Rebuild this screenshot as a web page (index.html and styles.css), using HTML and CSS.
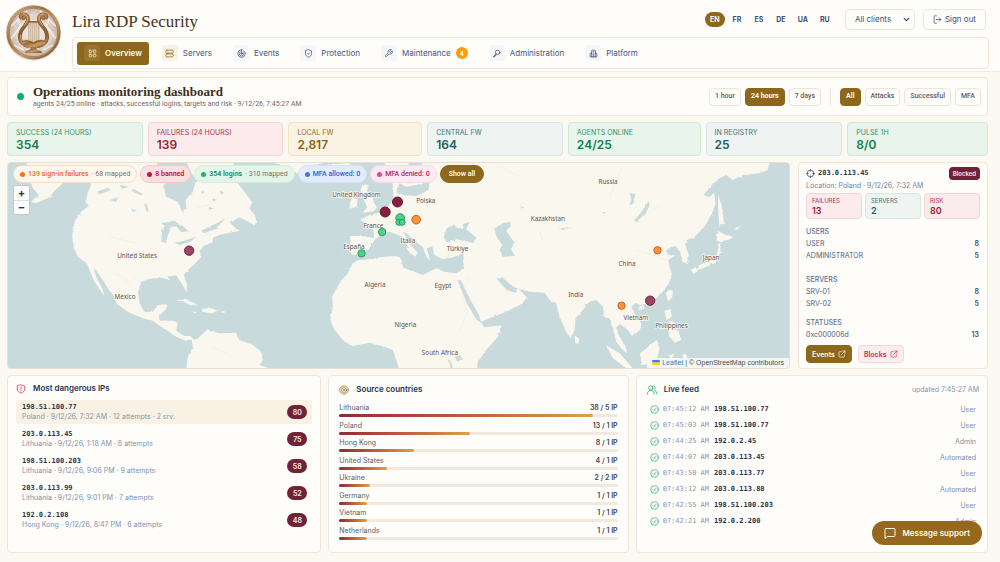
FILE: index.html
```html
<!DOCTYPE html>
<html lang="en">
<head>
<meta charset="utf-8">
<meta name="viewport" content="width=device-width, initial-scale=1">
<title>Lira RDP Security</title>
<link rel="stylesheet" href="styles.css">
</head>
<body>
<svg class="sprite" aria-hidden="true">
  <symbol id="i-grid" viewBox="0 0 24 24"><rect x="3" y="3" width="7" height="7" rx="2"/><rect x="14" y="3" width="7" height="7" rx="2"/><rect x="3" y="14" width="7" height="7" rx="2"/><rect x="14" y="14" width="7" height="7" rx="2"/></symbol>
  <symbol id="i-server" viewBox="0 0 24 24"><rect x="2" y="3" width="20" height="8" rx="3"/><rect x="2" y="13" width="20" height="8" rx="3"/></symbol>
  <symbol id="i-target" viewBox="0 0 24 24"><circle cx="12" cy="12" r="10"/><circle cx="12" cy="12" r="6"/><circle cx="12" cy="12" r="2"/></symbol>
  <symbol id="i-radar" viewBox="0 0 24 24"><path d="M19 5a10 10 0 1 1-14 0M16 8a6 6 0 1 1-8 0M5 5a10 10 0 0 1 9-3M12 12V2"/><circle cx="12" cy="12" r="2"/></symbol>
  <symbol id="i-shield" viewBox="0 0 24 24"><path d="M12 2l8 3v7c0 5-3 8-8 10-5-2-8-5-8-10V5z"/><path d="M9 12l2 2 4-4"/></symbol>
  <symbol id="i-alert" viewBox="0 0 24 24"><path d="M12 2l9 3v7c0 5-4 8-9 10-5-2-9-5-9-10V5z"/><path d="M12 7v6M12 16v1"/></symbol>
  <symbol id="i-wrench" viewBox="0 0 24 24"><path d="M15 6a1 1 0 0 0 0 1.500l1.500 1.500a1 1 0 0 0 1.500 0l4-4a6 6 0 0 1-8 8l-7 7a2 2 0 0 1-3-3l7-7a6 6 0 0 1 8-8z"/></symbol>
  <symbol id="i-key" viewBox="0 0 24 24"><circle cx="15" cy="9" r="6"/><path d="M11 13l-8 8h4v-3h3v-3"/></symbol>
  <symbol id="i-building" viewBox="0 0 24 24"><path d="M7 21V5q0-2 2-2h6q2 0 2 2v16M7 11H4q-1 0-1 2v8h18v-8q0-2-1-2h-3M11 7h2M11 11h2M11 15h2M11 21v-3h2v3"/></symbol>
  <symbol id="i-logout" viewBox="0 0 24 24"><path d="M9 2H5Q3 2 3 4v16q0 2 2 2h4M9 12h12M16 7l5 5-5 5"/></symbol>
  <symbol id="i-cross" viewBox="0 0 24 24"><circle cx="12" cy="12" r="9"/><path d="M12 1v5M12 18v5M1 12h5M18 12h5"/></symbol>
  <symbol id="i-ext" viewBox="0 0 24 24"><path d="M10 5H5Q3 5 3 7v12q0 2 2 2h12q2 0 2-2v-5M14 3h7v7M21 3L11 13"/></symbol>
  <symbol id="i-users" viewBox="0 0 24 24"><circle cx="9" cy="7" r="5"/><path d="M1 22q0-9 8-9t8 9M16 2a5 5 0 0 1 1 9q6 2 6 10"/></symbol>
  <symbol id="i-check" viewBox="0 0 24 24"><circle cx="12" cy="12" r="10"/><path d="M8 12l3 3 5-6"/></symbol>
  <symbol id="i-chat" viewBox="0 0 24 24"><path d="M4 3h16q2 0 2 2v12q0 2-2 2H7l-5 4V5q0-2 2-2z"/></symbol>
  <symbol id="i-down" viewBox="0 0 24 24"><path d="M4 8l8 8 8-8"/></symbol>
</svg>

<header class="header">
  <svg class="logo" viewBox="13 11 172 172" role="img" aria-label="Lira logo">
    <defs>
      <linearGradient id="bronze" x1="0" y1="0" x2="1" y2="1"><stop offset="0" stop-color="#dfb98a"/><stop offset=".35" stop-color="#9b6b3c"/><stop offset=".6" stop-color="#c79b68"/><stop offset="1" stop-color="#74491f"/></linearGradient>
      <linearGradient id="bronze2" x1="0" y1="0" x2="0" y2="1"><stop offset="0" stop-color="#b5824e"/><stop offset=".6" stop-color="#8b5c30"/><stop offset="1" stop-color="#bd8e5c"/></linearGradient>
      <radialGradient id="disc"><stop offset="0" stop-color="#f3ece6"/><stop offset=".7" stop-color="#dfd3ca"/><stop offset="1" stop-color="#c4ab95"/></radialGradient>
    </defs>
    <circle cx="99" cy="98" r="84" fill="#e6ddd2"/>
    <circle cx="99" cy="97" r="78" fill="url(#disc)" stroke="url(#bronze)" stroke-width="7"/>
    <circle cx="99" cy="97" r="73" fill="none" stroke="#80552d" stroke-width="1.500"/>
    <path d="M32 78L80 30M32 115L60 78M166 78L118 30M166 115L138 78M40 135L70 150M158 135L128 150M50 55l20 40M148 55l-20 40" stroke="#fff" stroke-width="5" fill="none" opacity=".6"/>
    <path d="M35 95L90 32M163 95L108 32" stroke="#c9b7a8" stroke-width="2" fill="none"/>
    <path d="M85 68v52M91 68v54M97 68v56M103 68v56M109 68v54M115 68v52" stroke="#a9825c" stroke-width="2"/>
    <path d="M78 65h42" stroke="#8f6237" stroke-width="5"/>
    <g fill="none" stroke-linecap="round">
      <path d="M61 52a6 6 0 1 1 8 2M67 42c20 0 19 20 6 35C56 96 50 120 72 134c8 4 18 5 27 5M137 52a6 6 0 1 0-8 2M131 42c-20 0-19 20-6 35 17 19 23 43 1 57-8 4-18 5-27 5" stroke="#744a24" stroke-width="11"/>
      <path d="M61 52a6 6 0 1 1 8 2M67 42c20 0 19 20 6 35C56 96 50 120 72 134c8 4 18 5 27 5M137 52a6 6 0 1 0-8 2M131 42c-20 0-19 20-6 35 17 19 23 43 1 57-8 4-18 5-27 5" stroke="url(#bronze2)" stroke-width="8"/>
      <path d="M70 41c15 2 15 18 2 34M128 41c-15 2-15 18-2 34M60 105c0 10 4 18 12 24" stroke="#e8c79c" stroke-width="2"/>
    </g>
    <path d="M62 125c12-10 26-6 37 1 11-7 25-11 37-1-8 15-22 20-37 20s-29-5-37-20z" fill="url(#bronze)"/>
    <path d="M64 125c14-6 24-1 35 5 11-6 21-11 35-5" fill="none" stroke="#6e4520" stroke-width="2"/>
    <path d="M92 143h14l3 7 14 4v4H75v-4l14-4z" fill="url(#bronze)" stroke="#744a24"/>
  </svg>
  <div class="header-main">
    <div class="topbar">
      <div class="brand">Lira RDP Security</div>
      <div class="langs" role="group" aria-label="Language">
        <button class="lang on">EN</button><button class="lang">FR</button><button class="lang">ES</button><button class="lang">DE</button><button class="lang">UA</button><button class="lang">RU</button>
      </div>
      <div class="picker"><select aria-label="Client"><option>All clients</option></select><svg class="icon bold"><use href="#i-down"/></svg></div>
      <button class="signout"><svg class="icon"><use href="#i-logout"/></svg>Sign out</button>
    </div>
    <nav class="nav">
      <a class="nav-item on" href="#"><span class="tile"><svg class="icon"><use href="#i-grid"/></svg></span>Overview</a>
      <a class="nav-item" href="#"><span class="tile gold"><svg class="icon"><use href="#i-server"/></svg></span>Servers</a>
      <a class="nav-item" href="#"><span class="tile"><svg class="icon"><use href="#i-radar"/></svg></span>Events</a>
      <a class="nav-item" href="#"><span class="tile"><svg class="icon"><use href="#i-shield"/></svg></span>Protection</a>
      <a class="nav-item" href="#"><span class="tile"><svg class="icon"><use href="#i-wrench"/></svg></span>Maintenance<span class="count">4</span></a>
      <a class="nav-item" href="#"><span class="tile"><svg class="icon"><use href="#i-key"/></svg></span>Administration</a>
      <a class="nav-item" href="#"><span class="tile"><svg class="icon"><use href="#i-building"/></svg></span>Platform</a>
    </nav>
  </div>
</header>

<main class="main">
  <section class="hero card">
    <span class="online"></span>
    <div class="hero-text">
      <h1>Operations monitoring dashboard</h1>
      <p>agents 24/25 online · attacks, successful logins, targets and risk · 9/12/26, 7:45:27 AM</p>
    </div>
    <div class="filters">
      <button class="filter">1 hour</button><button class="filter on">24 hours</button><button class="filter">7 days</button>
      <span class="divider"></span>
      <button class="filter on">All</button><button class="filter">Attacks</button><button class="filter">Successful</button><button class="filter">MFA</button>
    </div>
  </section>

  <section class="stats">
    <div class="stat green"><span>SUCCESS (24 HOURS)</span><b>354</b></div>
    <div class="stat red"><span>FAILURES (24 HOURS)</span><b>139</b></div>
    <div class="stat amber"><span>LOCAL FW</span><b>2,817</b></div>
    <div class="stat teal"><span>CENTRAL FW</span><b>164</b></div>
    <div class="stat green"><span>AGENTS ONLINE</span><b>24/25</b></div>
    <div class="stat teal"><span>IN REGISTRY</span><b>25</b></div>
    <div class="stat green"><span>PULSE 1H</span><b>8/0</b></div>
  </section>

  <section class="middle">
    <div class="map">
      <svg class="world" viewBox="24 9 2346 615" preserveAspectRatio="xMidYMid slice" role="img" aria-label="World map of sign-ins">
        <defs><filter id="coast" x="0" y="0" width="100%" height="100%"><feTurbulence type="fractalNoise" baseFrequency="0.1" numOctaves="3" seed="4"/><feDisplacementMap in="SourceGraphic" scale="7"/></filter></defs>
        <g filter="url(#coast)">
          <g class="land">
            <path d="M80 0H290L240 30 195 65 165 92 152 110 110 130 95 125 118 105 100 85 88 50z"/>
            <path d="M235 0H470L480 40 520 60 490 75 500 110 535 125 548 155 560 145 558 120 580 95 590 60 570 30 560 0H700L705 40 715 70 735 95 758 125 750 145 765 165 772 190 755 188 718 172 692 190 708 204 720 212 690 218 660 224 640 234 640 246 612 258 600 272 606 290 585 312 565 330 553 345 563 375 562 397 545 368 530 346 505 350 512 360 485 353 450 356 425 366 416 395 420 430 435 456 460 455 475 435 505 432 498 450 478 466 480 482 520 482 535 488 530 512 548 526 570 527 586 540 600 530 625 508 632 514 660 520 710 518 720 540 760 555 785 575 790 600 780 615 825 630H560L565 590 580 562 576 538 558 542 530 530 505 512 480 497 460 482 430 475 385 455 352 432 345 410 325 385 300 345 283 322 290 350 308 385 315 408 298 385 282 360 268 325 262 310 235 290 222 260 218 225 225 185 245 155 268 138 258 125 265 98 275 72 250 35z"/>
            <path d="M755 160l10 2 5 20-4 14-16-8zM528 422l30-6 40 20-25 0-25-12zM607 448l20-6 28 10-18 8-28-3zM578 455l14 1-4 4zM664 454h12v4h-12z"/>
            <path d="M800 0H1010L960 12 920 25 900 45 870 25zM985 14l60-5 25 12-40 15-35-8z"/>
            <path d="M1090 72l18 4-6 18 15 14 8 22 8 14-12 10-32 4 14-16-6-14-8-16-6-20zM1058 114l16 4-2 22-22 6 2-20z"/>
            <g transform="translate(1170)">
              <path d="M-20 0H1140L1135 30 1110 40 1060 45 1030 60 1010 45 985 58 962 80 942 106 962 110 974 98 978 130 968 160 945 200 915 230 892 240 887 252 898 285 892 310 878 306 872 275 860 260 845 260 828 272 838 285 857 286 836 300 840 320 848 345 838 370 820 395 800 415 772 430 752 436 740 428 725 440 735 460 755 490 752 510 728 528 715 510 692 492 680 502 690 530 706 555 714 580 698 568 680 545 672 510 660 475 645 472 640 440 620 420 600 425 580 450 558 475 555 510 544 535 530 515 510 470 500 430 485 425 465 398 420 395 380 385 358 370 338 352 330 358 348 385 368 396 386 385 412 412 400 430 350 455 275 485 282 502 337 496 325 530 290 570 265 605 262 630H30L20 600 10 570-15 560-60 548-110 558-135 545-165 510-178 480-170 440-172 410-150 370-125 340-110 310-92 300-60 298-20 290 20 288 40 286 55 260 40 230 0 215-30 228-45 240-62 268-90 285-112 284-120 270-118 228-85 228-46 234-50 202-88 180-62 166-30 158-5 140 12 118 10 75 0 40z"/>
              <path d="M828 400l10-10 12 2-2 22-12 10zM825 452l18-4 4 22-16 10zM838 500l30 14 6 26-18 8-18-20zM836 482l18 4-4 12zM555 526l14 10-2 16-10-4zM650 556l40 24 40 45h-20l-40-30zM752 580l50-40 8 24-10 44-44 8zM836 586l20-5-8 12 6 12zM880 583h12v20h-10zM748 440l14-5-4 14-10 2z"/>
              <path d="M986 105l10 30 8 55-14 10-4-50zM985 212l24 14 22 4-10 8-28 6-12-2zM994 248l-2 30-14 30-30 14-26 8 8-15 32-12 22-20 2-30zM905 328l14-6 4 14-12 6zM1035 208l20-12-12 14z"/>
            </g>
          </g>
          <g class="water" transform="translate(1170)">
            <path d="M-95 300L-60 290-30 262-20 240 0 230 25 232 42 255 62 280 78 290 84 278 60 250 40 215 55 222 85 250 100 262 110 290 122 300 112 265 128 258 134 284 160 298 190 292 222 280 222 325 200 340 165 335 140 325 100 345 60 330 40 322 34 292 0 285-40 294z"/>
            <path d="M163 232L172 204 192 194 204 204 222 204 220 192 240 186 230 208 262 234 250 248 200 238 172 248zM314 206L340 190 362 185 364 198 350 212 362 230 374 245 365 268 376 288 340 290 330 270 338 255 322 232zM205 362L214 360 240 415 268 465 276 490 262 480 232 430zM320 355l22 2 30 28 14 0-10 12-24-6zM40 105L20 98 30 70 50 80 100 72 112 50 150 40 120 60 118 90 80 108zM40 40L65 0 100 0 90 40 70 70 50 70z"/>
            <path d="M735 180l30-35 12-22 4 12-14 28-30 25zM720 100l18 2-8 30-10 4 6-20zM640 155l10 2-8 4zM510 208l10-5 30-2-28 8zM195 590l16-3 10 10-18 8zM176 595l10 14 6 22-8-8zM395 140l10 2-10 4z"/>
          </g>
          <g class="water"><path d="M485 245l4-40 18-14 40 4 20 18-22 4-14-18-16 2-10 26-6 22zM524 248l30-6 36-12-14 14-34 10zM485 190l40-8 14 10-40 8z"/>
            <path d="M292 95l34-12 8 8-34 12zM330 120l26-8-6 14zM400 86l30 16-6 4-28-12zM440 130l8 24-6 2-8-22zM395 145l18 8-14 2zM360 75l28 5-20 6zM605 90l10 6-8 6zM640 115l12 4-12 6zM660 90l14 10-10 3zM625 140l20 5-18 4zM605 212l50-24 24-14-30 32-36 14z"/></g>
        </g>
        <path class="river" d="M345 340l30 14 20 25M590 145l40-12M1410 350l-20 50 12 60-24 60M1560 50l-60-30M1630 240l-12-30M1900 180l80-40M1870 20l-40 90M330 230l80 20M640 560l60 30M1910 270l90 30M470 410l-70-60"/>
        <g class="labels">
          <text x="998" y="110">United Kingdom</text><text x="1250" y="130">Polska</text><text x="1092" y="204">France</text><text x="1031" y="268">España</text><text x="1203" y="248">Italia</text><text x="1342" y="274">Türkiye</text><text x="353" y="293">United States</text><text x="345" y="416">Mexico</text><text x="1095" y="380">Algeria</text><text x="1305" y="383">Egypt</text><text x="1185" y="502">Nigeria</text><text x="1267" y="585">South Africa</text><text x="1797" y="73">Russia</text><text x="1594" y="183">Kazakhstan</text><text x="1857" y="317">China</text><text x="2110" y="301">Japan</text><text x="1706" y="411">India</text><text x="1872" y="479">Vietnam</text><text x="1967" y="504">Philippines</text>
        </g>
        <g class="pins">
          <g class="pin-ban"><circle cx="1157" cy="156" r="15"/><circle cx="1194" cy="126" r="15"/></g>
          <g class="pin-ban soft"><circle cx="569" cy="272" r="14"/><circle cx="1952" cy="422" r="14"/></g>
          <g class="pin-fail"><circle cx="1250" cy="179" r="13"/><circle cx="1974" cy="271" r="11"/><circle cx="1866" cy="437" r="11"/></g>
          <g class="pin-ok"><circle cx="1148" cy="216" r="11"/><circle cx="1086" cy="280" r="11"/><circle cx="1202" cy="174" r="13"/><circle cx="1198" cy="187" r="9"/><circle cx="1208" cy="187" r="9"/></g>
        </g>
      </svg>
      <div class="chips">
        <button class="chip c-orange"><i></i><b>139 sign-in failures</b><span>· 68 mapped</span></button>
        <button class="chip c-red"><i></i><b>8 banned</b></button>
        <button class="chip c-green"><i></i><b>354 logins</b><span>· 310 mapped</span></button>
        <button class="chip c-blue"><i></i>MFA allowed: 0</button>
        <button class="chip c-pink"><i></i>MFA denied: 0</button>
        <button class="chip c-all"><b>Show all</b></button>
      </div>
      <div class="zoom"><button aria-label="Zoom in">+</button><button aria-label="Zoom out">−</button></div>
      <div class="credit"><svg class="flag" viewBox="0 0 12 8"><path fill="#4c7be1" d="M0 0h12v4H0z"/><path fill="#ffd500" d="M0 4h12v4H0z"/></svg><a href="#">Leaflet</a> | © OpenStreetMap contributors</div>
    </div>

    <aside class="card details">
      <div class="ip-head"><svg class="icon"><use href="#i-cross"/></svg><b class="mono">203.0.113.45</b><span class="blocked">Blocked</span></div>
      <p class="where">Location: Poland · 9/12/26, 7:32 AM</p>
      <div class="minis">
        <div class="mini red"><span>FAILURES</span><b>13</b></div>
        <div class="mini teal"><span>SERVERS</span><b>2</b></div>
        <div class="mini red"><span>RISK</span><b>80</b></div>
      </div>
      <dl class="group"><dt class="cap">USERS</dt><div><dt>USER</dt><dd>8</dd></div><div><dt>ADMINISTRATOR</dt><dd>5</dd></div></dl>
      <dl class="group"><dt class="cap">SERVERS</dt><div><dt>SRV-01</dt><dd>8</dd></div><div><dt>SRV-02</dt><dd>5</dd></div></dl>
      <dl class="group"><dt class="cap">STATUSES</dt><div><dt>0xc000006d</dt><dd>13</dd></div></dl>
      <div class="actions"><a class="action gold" href="#">Events<svg class="icon"><use href="#i-ext"/></svg></a><a class="action rose" href="#">Blocks<svg class="icon"><use href="#i-ext"/></svg></a></div>
    </aside>
  </section>

  <section class="bottom">
    <div class="card panel">
      <h2><svg class="icon red-i"><use href="#i-alert"/></svg>Most dangerous IPs</h2>
      <ul class="ips">
        <li class="on"><div><b class="mono">198.51.100.77</b><p>Poland · 9/12/26, 7:32 AM · 12 attempts · 2 srv.</p></div><span class="score">80</span></li>
        <li><div><b class="mono">203.0.113.45</b><p>Lithuania · 9/12/26, 1:18 AM · 8 attempts</p></div><span class="score">75</span></li>
        <li><div><b class="mono">198.51.100.203</b><p>Lithuania · 9/12/26, 9:06 PM · 9 attempts</p></div><span class="score">58</span></li>
        <li><div><b class="mono">203.0.113.99</b><p>Lithuania · 9/12/26, 9:01 PM · 7 attempts</p></div><span class="score">52</span></li>
        <li><div><b class="mono">192.0.2.108</b><p>Hong Kong · 9/12/26, 8:47 PM · 6 attempts</p></div><span class="score">48</span></li>
      </ul>
    </div>
    <div class="card panel sources">
      <h2><svg class="icon gold-i"><use href="#i-target"/></svg>Source countries</h2>
      <ul class="bars">
        <li><span>Lithuania</span><b>38 / 5 IP</b><div class="track"><div class="fill" style="width:91%"></div></div></li>
        <li><span>Poland</span><b>13 / 1 IP</b><div class="track"><div class="fill" style="width:47%"></div></div></li>
        <li><span>Hong Kong</span><b>8 / 1 IP</b><div class="track"><div class="fill" style="width:27%"></div></div></li>
        <li><span>United States</span><b>4 / 1 IP</b><div class="track"><div class="fill" style="width:17%"></div></div></li>
        <li><span>Ukraine</span><b>2 / 2 IP</b><div class="track"><div class="fill" style="width:11%"></div></div></li>
        <li><span>Germany</span><b>1 / 1 IP</b><div class="track"><div class="fill" style="width:10%"></div></div></li>
        <li><span>Vietnam</span><b>1 / 1 IP</b><div class="track"><div class="fill" style="width:10%"></div></div></li>
        <li><span>Netherlands</span><b>1 / 1 IP</b><div class="track"><div class="fill" style="width:10%"></div></div></li>
      </ul>
    </div>
    <div class="card panel feed">
      <h2><svg class="icon green-i"><use href="#i-users"/></svg>Live feed<small>updated 7:45:27 AM</small></h2>
      <ul class="events">
        <li><svg class="icon green-i"><use href="#i-check"/></svg><time>07:45:12 AM</time><b class="mono">198.51.100.77</b><span>User</span></li>
        <li><svg class="icon green-i"><use href="#i-check"/></svg><time>07:45:03 AM</time><b class="mono">198.51.100.77</b><span>User</span></li>
        <li><svg class="icon green-i"><use href="#i-check"/></svg><time>07:44:25 AM</time><b class="mono">192.0.2.45</b><span>Admin</span></li>
        <li><svg class="icon green-i"><use href="#i-check"/></svg><time>07:44:07 AM</time><b class="mono">203.0.113.45</b><span>Automated</span></li>
        <li><svg class="icon green-i"><use href="#i-check"/></svg><time>07:43:50 AM</time><b class="mono">203.0.113.77</b><span>User</span></li>
        <li><svg class="icon green-i"><use href="#i-check"/></svg><time>07:43:12 AM</time><b class="mono">203.0.113.88</b><span>Automated</span></li>
        <li><svg class="icon green-i"><use href="#i-check"/></svg><time>07:42:55 AM</time><b class="mono">198.51.100.203</b><span>User</span></li>
        <li><svg class="icon green-i"><use href="#i-check"/></svg><time>07:42:21 AM</time><b class="mono">192.0.2.200</b><span>Admin</span></li>
      </ul>
    </div>
  </section>
</main>
<button class="support"><svg class="icon"><use href="#i-chat"/></svg>Message support</button>
</body>
</html>
```

FILE: styles.css
```css
* { box-sizing: border-box; margin: 0; padding: 0; }

body {
  min-height: 100vh;
  display: flex;
  flex-direction: column;
  background: #fcf9f3;
  color: #2d3a54;
  font: 7px/9px Inter, Roboto, sans-serif;
}

button, select { font: inherit; color: inherit; border: 0; background: none; cursor: pointer; }
a { color: inherit; text-decoration: none; }
ul { list-style: none; }
.sprite { position: absolute; width: 0; height: 0; }

.icon {
  width: 9px;
  height: 9px;
  flex: none;
  fill: none;
  stroke: currentColor;
  stroke-width: 2;
  stroke-linecap: round;
  stroke-linejoin: round;
}
.icon.bold { stroke-width: 4; }
.mono, time { font-family: "DejaVu Sans Mono", "Liberation Mono", monospace; }
.hero p, .filter, .chip { font-family: Roboto, Inter, sans-serif; }

.card { background: #fefdfa; border: 1px solid #f0e7dc; border-radius: 4px; }

/* Header */
.header {
  display: flex;
  gap: 10px;
  padding: 4px 11px 2px 5px;
  background: #fefdfa;
  border-bottom: 1px solid #f0e9e0;
}
.logo { width: 57px; height: 57px; flex: none; }
.header-main { flex: 1; display: flex; flex-direction: column; gap: 7px; padding-top: 5px; }
.topbar { display: flex; align-items: center; height: 21px; padding-right: 3px; }
.brand { flex: 1; font: 17px/21px "Liberation Serif", serif; color: #463322; padding-top: 3px; }
.langs { display: flex; gap: 2px; margin-right: 10px; }
.lang { width: 20px; height: 15px; border-radius: 8px; font-weight: 700; color: #3f4f74; }
.lang.on { background: #8d671b; color: #fff8e8; }
.picker { position: relative; margin-right: 8px; }
.picker select {
  appearance: none;
  width: 70px;
  height: 21px;
  padding: 0 9px;
  border: 1px solid #ece5da;
  border-radius: 4px;
  font-size: 8px;
  font-weight: 400;
  color: #3f4f74;
}
.picker .icon { position: absolute; right: 5px; top: 7px; width: 7px; height: 7px; pointer-events: none; color: #2f4069; }
.signout {
  display: flex;
  align-items: center;
  gap: 3px;
  height: 21px;
  padding: 0 9px;
  border: 1px solid #ece5da;
  border-radius: 4px;
  font-size: 8px;
  font-weight: 400;
  color: #3f4f74;
}
.nav {
  display: flex;
  align-items: center;
  gap: 5px;
  height: 32px;
  padding: 0 4px;
  border: 1px solid #eee6dc;
  border-radius: 4px;
}
.nav-item {
  display: flex;
  align-items: center;
  gap: 5px;
  height: 23px;
  padding: 0 8px;
  border-radius: 3px;
  font-size: 8px;
  font-weight: 400;
  color: #45557a;
}
.nav-item.on { padding: 0 7px; background: #8d671b; color: #fffaf0; font-weight: 600; }
.tile { display: grid; place-items: center; width: 16px; height: 16px; border-radius: 3px; background: #f4f6f8; }
.tile.gold { background: #f9f2e3; color: #8d671b; }
.on .tile { background: #98742f; color: #f7e8c4; }
.count { display: grid; place-items: center; width: 12px; height: 12px; border-radius: 50%; background: #ff9c06; color: #fff; font-size: 6px; font-weight: 700; }

/* Main */
.main { flex: 1; display: flex; flex-direction: column; gap: 6px; padding: 5px 12px 9px 7px; }
.hero { display: flex; align-items: center; min-height: 39px; padding: 0 6px 0 9px; }
.online { width: 7px; height: 7px; border-radius: 50%; background: #0cae74; margin-right: 9px; }
.hero-text { flex: 1; }
.hero h1 { font: 700 13px/15px "Liberation Serif", serif; color: #3d2d20; }
.hero p { color: #716a68; line-height: 11px; }
.filters { display: flex; align-items: center; gap: 4px; }
.filter { height: 18px; padding: 0 5px; border: 1px solid #ede5db; border-radius: 4px; color: #655c57; font-weight: 500; }
.filter.on { background: #8d671b; border-color: #8d671b; color: #fffaf0; font-weight: 700; }
.divider { width: 1px; height: 17px; margin: 0 5px; background: #eee7de; }

.stats { display: grid; grid-template-columns: 136fr 136fr 134fr 136fr 133fr 137fr 141fr; gap: 5px; }
.stat { display: flex; flex-direction: column; padding: 5px 8px 3px; border: 1px solid; border-radius: 4px; font-weight: 400; }
.stat b { font-size: 12px; line-height: 15px; font-weight: 600; }
.green { background: #e9f5ec; border-color: #cfe9d8; color: #33915f; }
.green b { color: #11804b; }
.red { background: #fcebed; border-color: #f6d3d9; color: #a93549; }
.red b { color: #9b1b33; }
.amber { background: #faf2e2; border-color: #f2e3c3; color: #966b1f; }
.amber b { color: #8a5f15; }
.teal { background: #eff3f1; border-color: #d7e5e3; color: #34777a; }
.teal b { color: #1b5f63; }

/* Map row */
.middle { display: grid; grid-template-columns: 783fr 190fr; gap: 8px; }
.map { position: relative; overflow: hidden; border: 1px solid #e7e0d5; border-radius: 4px; background: #c8dadc; }
.world { position: absolute; inset: 0; width: 100%; height: 100%; }
.land { fill: #faf7ef; }
.water { fill: #c8dadc; }
.river { fill: none; stroke: #dde5df; stroke-width: 1; }
.labels { font: 19px "Noto Sans", sans-serif; fill: #5c5452; stroke: #faf7ef; stroke-width: 4; paint-order: stroke; }
.pins { stroke-width: 3; }
.pin-ban { fill: #85213f; stroke: #641630; }
.pin-ban.soft { fill: #9c4665; stroke: #742746; }
.pin-fail { fill: #fb923c; stroke: #c9611c; }
.pin-ok { fill: #4fd18c; stroke: #249d60; }
.chips { position: absolute; left: 5px; top: 2px; display: flex; gap: 3px; }
.chip { display: flex; align-items: center; gap: 3px; height: 18px; padding: 0 6px; border: 1px solid; border-radius: 9px; font-weight: 500; white-space: nowrap; }
.chip b { font-weight: 600; }
.chip span { color: #7a7068; font-weight: 400; }
.chip i { width: 5px; height: 5px; border-radius: 50%; background: #f97316; }
.c-orange { background: #fdf7ee; border-color: #fbdcc0; color: #ee6c1b; }
.c-red { background: #fcdfe1; border-color: #f7c4ca; color: #be1238; }
.c-red i { background: #c9163c; }
.c-green { background: #e4f6ea; border-color: #cff0da; color: #208a50; }
.c-green i { background: #20b663; }
.c-blue { background: #e3ecfc; border-color: #d5e2fb; color: #315fd0; }
.c-blue i { background: #3b76f0; }
.c-pink { background: #fdeaf2; border-color: #fbd8e6; color: #bd2458; }
.c-pink i { background: #e8468f; }
.c-all { background: #8d671b; border-color: #8d671b; color: #fffaf0; padding: 0 8px; }
.zoom { position: absolute; left: 5px; top: 22px; display: grid; width: 17px; border: 1px solid #c3c8c6; border-radius: 2px; background: #fff; }
.zoom button { height: 14px; font: 700 11px/13px Inter, sans-serif; color: #333; }
.zoom button + button { border-top: 1px solid #ddd; }
.credit { position: absolute; right: 0; bottom: 0; padding: 0 5px; background: #f4f6f4; color: #4c4c4c; font: 7px/10px "Liberation Sans", sans-serif; }
.credit a { color: #2786b9; }
.flag { width: 8px; height: 5px; margin-right: 2px; }

/* Details */
.details { display: flex; flex-direction: column; padding: 4px 7px 5px; }
.ip-head { display: flex; align-items: center; gap: 3px; height: 13px; color: #3e5183; }
.ip-head b { flex: 1; color: #29344c; }
.blocked { padding: 2px 4px; border-radius: 4px; background: #741f38; color: #f8e9ec; font-size: 6px; font-weight: 600; }
.where { color: #76839c; line-height: 12px; margin-bottom: 1px; }
.minis { display: grid; grid-template-columns: repeat(3, 1fr); gap: 3px; margin-bottom: 7px; }
.mini { display: flex; flex-direction: column; padding: 3px 5px 1px; border-width: 1px; border-style: solid; border-radius: 4px; font-size: 6px; line-height: 8px; }
.mini b { font-size: 9px; line-height: 12px; font-weight: 600; }
.group { line-height: 12px; margin-bottom: 7px; color: #56627a; }
.group div { display: flex; justify-content: space-between; padding-right: 1px; }
.group dd { font-weight: 600; color: #404b62; }
.cap { color: #5f7198; font-weight: 500; }
.group:first-of-type { margin-bottom: 12px; }
.group:last-of-type { margin-bottom: 4px; }
.actions { display: flex; gap: 6px; margin-top: auto; }
.action { display: flex; align-items: center; gap: 3px; height: 18px; padding: 0 5px; border: 1px solid #8d671b; border-radius: 4px; font-weight: 600; }
.action .icon { width: 8px; height: 8px; }
.action.gold { background: #8d671b; color: #fffaf0; }
.action.rose { background: #fdedf0; border-color: #f9d4db; color: #d92450; }

/* Bottom panels */
.bottom { flex: 1; display: grid; grid-template-columns: 314fr 300fr 352fr; gap: 7px; }
.panel { display: flex; flex-direction: column; padding: 7px 8px 14px; }
.panel h2 { display: flex; align-items: center; gap: 7px; font-size: 8px; line-height: 11px; font-weight: 600; color: #27324f; }
.panel h2 .icon { width: 10px; height: 10px; }
.panel h2 small { flex: 1; text-align: right; font-size: 7px; font-weight: 400; color: #8794ae; }
.red-i { color: #e23b5a; }
.gold-i { color: #a0783c; }
.green-i { color: #27ab78; }
.ips { display: flex; flex-direction: column; gap: 3px; margin-top: 6px; }
.ips li { display: flex; align-items: center; justify-content: space-between; height: 24px; padding: 0 5px 0 6px; border-radius: 3px; }
.ips li.on { background: #f9f2e4; }
.ips b { color: #29344c; display: block; line-height: 9px; }
.ips p { color: #8392b0; line-height: 10px; }
.score { display: grid; place-items: center; width: 20px; height: 14px; border-radius: 7px; background: #702337; color: #fbeef0; font-weight: 600; }
.sources, .feed { padding: 8px 10px 12px; }
.bars { flex: 1; display: flex; flex-direction: column; justify-content: space-between; margin-top: 8px; }
.bars li { display: flex; flex-wrap: wrap; justify-content: space-between; row-gap: 2px; color: #5c6068; }
.bars b { font-weight: 600; color: #3e4552; }
.track { width: 100%; height: 3px; border-radius: 2px; background: #f1e9df; }
.fill { height: 3px; border-radius: 2px; background: linear-gradient(90deg, #8f2a35, #b9603c 50%, #dba14c); }
.feed h2 { margin-right: -2px; }
.events { display: flex; flex-direction: column; margin-top: 6px; padding: 0 1px 0 3px; }
.events li { display: flex; align-items: center; height: 16px; }
.events time { margin: 0 5px 0 4px; color: #8897b3; }
.events b { flex: 1; color: #29344c; }
.events span { color: #7e8ead; }

.support {
  position: fixed;
  right: 18px;
  bottom: 17px;
  display: flex;
  align-items: center;
  gap: 6px;
  height: 24px;
  padding: 0 12px;
  border-radius: 12px;
  background: #94691d;
  color: #fff8ea;
  font-size: 8px;
  font-weight: 600;
}
.support .icon { width: 12px; height: 12px; }
```
